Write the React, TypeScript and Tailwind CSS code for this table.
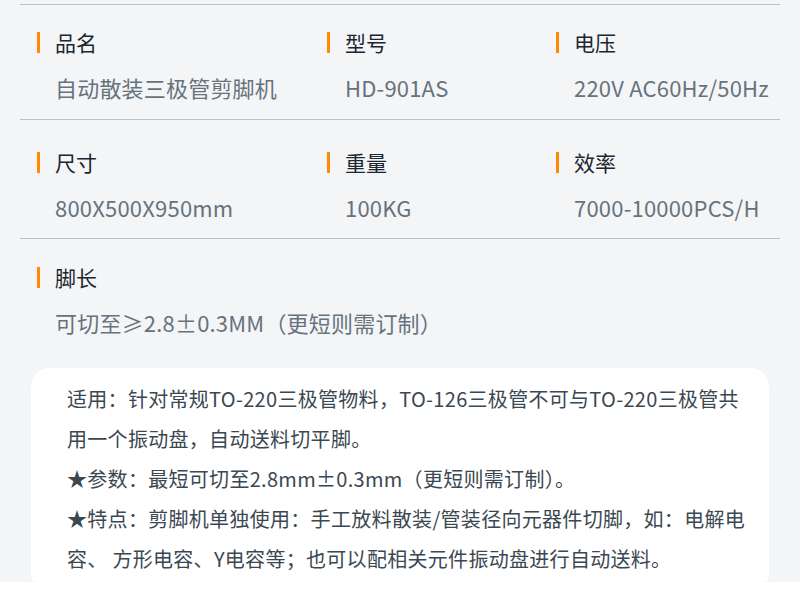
const font = { fontFamily: '"Noto Sans CJK SC", "Noto Sans", sans-serif' };

type Spec = { label: string; value: string };

const rows: Spec[][] = [
  [
    { label: "品名", value: "自动散装三极管剪脚机" },
    { label: "型号", value: "HD-901AS" },
    { label: "电压", value: "220V AC60Hz/50Hz" },
  ],
  [
    { label: "尺寸", value: "800X500X950mm" },
    { label: "重量", value: "100KG" },
    { label: "效率", value: "7000-10000PCS/H" },
  ],
];

function Cell({ label, value }: Spec) {
  return (
    <div className="flex flex-col">
      <div className="flex items-center gap-[15px]">
        <span className="h-[21px] w-[3px] bg-[#ff8a00]" />
        <span className="text-[21px] leading-[28px] text-[#1c2630]">{label}</span>
      </div>
      <div className="mt-[17px] whitespace-nowrap pl-[18px] text-[22px] leading-[28px] tracking-[0.2px] text-[#66737d]">
        {value}
      </div>
    </div>
  );
}

export default function App() {
  return (
    <main className="h-[606px] w-[800px] overflow-hidden bg-white" style={font}>
      <div className="bg-[#f4f5f7] px-[20px] pt-[4px]">
        <div className="border-t border-[#b9c0c6]" />
        {rows.map((row, i) => (
          <div
            key={i}
            className={`grid grid-cols-[290px_229px_1fr] border-b border-[#b9c0c6] pl-[17px] ${
              i === 0 ? "pb-[18px] pt-[23px]" : "pb-[17px] pt-[28px]"
            }`}
          >
            {row.map((c) => (
              <Cell key={c.label} {...c} />
            ))}
          </div>
        ))}
        <div className="pb-[32px] pl-[17px] pt-[24px]">
          <Cell label="脚长" value="可切至≥2.8±0.3MM（更短则需订制）" />
        </div>
        <div className="mx-[11px] rounded-t-[18px] rounded-b-[6px] bg-white pb-[3px] pl-[36px] pr-[20px] pt-[11px] text-[20px] leading-[40px] tracking-[0.3px] text-[#3b4852]">
          <p>适用：针对常规TO-220三极管物料，TO-126三极管不可与TO-220三极管共用一个振动盘，自动送料切平脚。</p>
          <p>★参数：最短可切至2.8mm±0.3mm（更短则需订制）。</p>
          <p>★特点：剪脚机单独使用：手工放料散装/管装径向元器件切脚，如：电解电容、 方形电容、Y电容等；也可以配相关元件振动盘进行自动送料。</p>
        </div>
      </div>
    </main>
  );
}
